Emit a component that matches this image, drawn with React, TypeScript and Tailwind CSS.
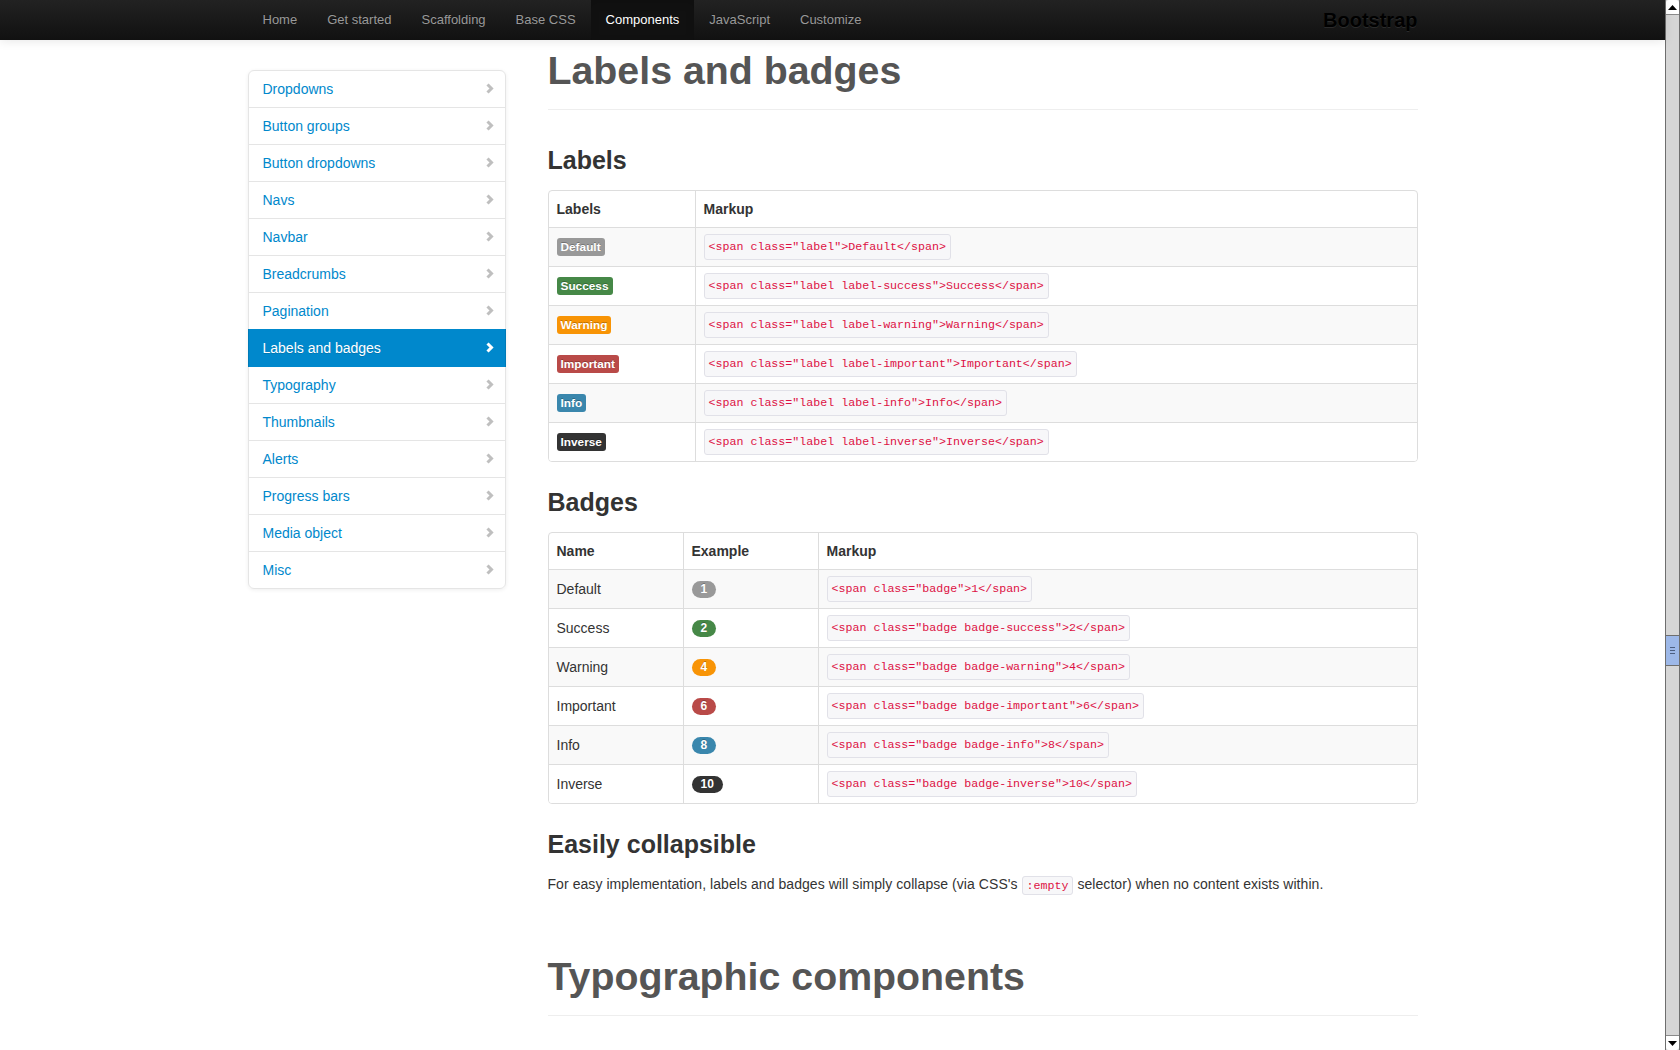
const navLinks = ["Home", "Get started", "Scaffolding", "Base CSS", "Components", "JavaScript", "Customize"];

const sideItems = [
  "Dropdowns",
  "Button groups",
  "Button dropdowns",
  "Navs",
  "Navbar",
  "Breadcrumbs",
  "Pagination",
  "Labels and badges",
  "Typography",
  "Thumbnails",
  "Alerts",
  "Progress bars",
  "Media object",
  "Misc",
];

const labels = [
  { name: "Default", cls: "label", bg: "bg-[#999999]" },
  { name: "Success", cls: "label label-success", bg: "bg-[#468847]" },
  { name: "Warning", cls: "label label-warning", bg: "bg-[#f89406]" },
  { name: "Important", cls: "label label-important", bg: "bg-[#b94a48]" },
  { name: "Info", cls: "label label-info", bg: "bg-[#3a87ad]" },
  { name: "Inverse", cls: "label label-inverse", bg: "bg-[#333333]" },
];

const badges = [
  { name: "Default", cls: "badge", n: "1", bg: "bg-[#999999]" },
  { name: "Success", cls: "badge badge-success", n: "2", bg: "bg-[#468847]" },
  { name: "Warning", cls: "badge badge-warning", n: "4", bg: "bg-[#f89406]" },
  { name: "Important", cls: "badge badge-important", n: "6", bg: "bg-[#b94a48]" },
  { name: "Info", cls: "badge badge-info", n: "8", bg: "bg-[#3a87ad]" },
  { name: "Inverse", cls: "badge badge-inverse", n: "10", bg: "bg-[#333333]" },
];

function Chevron({ active }: { active?: boolean }) {
  return (
    <svg width="14" height="14" viewBox="0 0 14 14" className="mr-[-6px] shrink-0">
      <polyline
        points="4.5,2.5 8.5,6.5 4.5,10.5"
        fill="none"
        stroke={active ? "#ffffff" : "#bfbfbf"}
        strokeWidth="3"
        strokeLinejoin="miter"
      />
    </svg>
  );
}

function Code({ children }: { children: string }) {
  return (
    <code className="rounded-[3px] border border-[#e1e1e8] bg-[#f7f7f9] px-1 py-[2px] font-['Liberation_Mono',monospace] text-[11.65px] tracking-normal whitespace-pre text-[#dd1144]">
      {children}
    </code>
  );
}

function Navbar() {
  return (
    <nav className="relative z-20 h-[40px] shrink-0 bg-gradient-to-b from-[#222222] to-[#111111] shadow-[0_1px_10px_rgba(0,0,0,0.1)]">
      <div className="mx-auto flex w-[1170px] items-center justify-between">
        <ul className="flex">
          {navLinks.map((l) => (
            <li key={l}>
              <a
                className={
                  l === "Components"
                    ? "block bg-[#111111] px-[15px] py-[10px] text-[13px] leading-[20px] text-white shadow-[inset_0_3px_8px_rgba(0,0,0,0.125)]"
                    : "block px-[15px] py-[10px] text-[13px] leading-[20px] text-[#999999] [text-shadow:0_-1px_0_rgba(0,0,0,0.25)]"
                }
              >
                {l}
              </a>
            </li>
          ))}
        </ul>
        <a className="py-[10px] text-[20px] leading-[20px] font-bold text-black [text-shadow:0_1px_0_rgba(255,255,255,0.1)]">
          Bootstrap
        </a>
      </div>
    </nav>
  );
}

function Sidebar() {
  return (
    <ul className="mt-[30px] w-[258px] rounded-[6px] bg-white shadow-[0_1px_4px_rgba(0,0,0,0.065)]">
      {sideItems.map((s, i) => {
        const active = s === "Labels and badges";
        const first = i === 0;
        const last = i === sideItems.length - 1;
        return (
          <li key={s} className={active ? "relative z-10 -mb-px" : "-mb-px"}>
            <a
              className={
                active
                  ? "flex h-[38px] items-center justify-between bg-[#0088cc] px-[15px] text-white [text-shadow:0_1px_0_rgba(0,0,0,0.15)] shadow-[inset_1px_0_0_rgba(0,0,0,0.1),inset_-1px_0_0_rgba(0,0,0,0.1)]"
                  : `flex h-[38px] items-center justify-between border border-[#e5e5e5] px-[14px] text-[#0088cc] ${
                      first ? "rounded-t-[6px]" : ""
                    } ${last ? "rounded-b-[6px]" : ""}`
              }
            >
              <span>{s}</span>
              <Chevron active={active} />
            </a>
          </li>
        );
      })}
    </ul>
  );
}

function LabelsTable() {
  return (
    <div className="mt-[10px] overflow-hidden rounded-[4px] border border-[#dddddd]">
      <div className="flex h-[36px] items-center font-bold">
        <div className="w-[146px] px-2">Labels</div>
        <div className="flex h-full flex-1 items-center border-l border-[#dddddd] px-2">Markup</div>
      </div>
      {labels.map((l, i) => (
        <div
          key={l.name}
          className={`flex h-[39px] border-t border-[#dddddd] ${i % 2 === 0 ? "bg-[#f9f9f9]" : "bg-white"}`}
        >
          <div className="flex w-[146px] items-center px-2">
            <span
              className={`rounded-[3px] px-1 py-[2px] text-[11.844px] leading-[14px] font-bold text-white [text-shadow:0_-1px_0_rgba(0,0,0,0.25)] ${l.bg}`}
            >
              {l.name}
            </span>
          </div>
          <div className="flex flex-1 items-center border-l border-[#dddddd] px-2">
            <Code>{`<span class="${l.cls}">${l.name}</span>`}</Code>
          </div>
        </div>
      ))}
    </div>
  );
}

function BadgesTable() {
  return (
    <div className="mt-[10px] overflow-hidden rounded-[4px] border border-[#dddddd]">
      <div className="flex h-[36px] font-bold">
        <div className="flex w-[134px] items-center px-2">Name</div>
        <div className="flex w-[135px] items-center border-l border-[#dddddd] px-2">Example</div>
        <div className="flex flex-1 items-center border-l border-[#dddddd] px-2">Markup</div>
      </div>
      {badges.map((b, i) => (
        <div
          key={b.name}
          className={`flex h-[39px] border-t border-[#dddddd] ${i % 2 === 0 ? "bg-[#f9f9f9]" : "bg-white"}`}
        >
          <div className="flex w-[134px] items-center px-2">{b.name}</div>
          <div className="flex w-[135px] items-center border-l border-[#dddddd] px-2">
            <span
              className={`rounded-[9px] px-[9px] py-[2px] text-[12px] leading-[13px] font-bold text-white [text-shadow:0_-1px_0_rgba(0,0,0,0.25)] ${b.bg}`}
            >
              {b.n}
            </span>
          </div>
          <div className="flex flex-1 items-center border-l border-[#dddddd] px-2">
            <Code>{`<span class="${b.cls}">${b.n}</span>`}</Code>
          </div>
        </div>
      ))}
    </div>
  );
}

function Scrollbar() {
  return (
    <div className="flex h-full w-[15px] shrink-0 flex-col border-x border-[#6e6e6e] bg-[#d6d6d6]">
      <div className="flex h-[15px] items-center justify-center rounded-t-[3px] border-b border-[#8a8a8a] bg-white">
        <svg width="9" height="5" viewBox="0 0 9 5">
          <polygon points="0,5 4.5,0 9,5" fill="#000" />
        </svg>
      </div>
      <div className="flex-1">
        <div className="mt-[620px] flex h-[31px] flex-col items-center justify-center gap-[2px] border-y border-[#6e6e6e] bg-[#9db8e8]">
          <div className="h-px w-[5px] bg-[#4c5e80]" />
          <div className="h-px w-[5px] bg-[#4c5e80]" />
          <div className="h-px w-[5px] bg-[#4c5e80]" />
        </div>
      </div>
      <div className="flex h-[15px] items-center justify-center rounded-b-[3px] border-t border-[#8a8a8a] bg-white">
        <svg width="9" height="5" viewBox="0 0 9 5">
          <polygon points="0,0 9,0 4.5,5" fill="#000" />
        </svg>
      </div>
    </div>
  );
}

export default function App() {
  return (
    <div className="flex h-[1050px] overflow-hidden bg-white font-['Liberation_Sans',Arial,sans-serif] text-[14px] leading-[20px] text-[#333333]">
      <div className="flex min-w-0 flex-1 flex-col">
        <Navbar />
        <div className="mx-auto flex w-[1170px] gap-[30px]">
          <aside className="w-[270px] shrink-0">
            <Sidebar />
          </aside>
          <main className="flex w-[870px] flex-col">
            <div className="border-b border-[#eeeeee] pt-[10px] pb-[9px]">
              <h1 className="mb-[10px] text-[39.3px] leading-[40px] font-bold text-[#555555]">Labels and badges</h1>
            </div>

            <h3 className="mt-[30px] text-[25px] leading-[40px] font-bold">Labels</h3>
            <LabelsTable />

            <h3 className="mt-[20px] text-[25px] leading-[40px] font-bold">Badges</h3>
            <BadgesTable />

            <h3 className="mt-[20px] text-[25px] leading-[40px] font-bold">Easily collapsible</h3>
            <p className="mt-[10px] tracking-[0.06px]">
              For easy implementation, labels and badges will simply collapse (via CSS's <Code>:empty</Code> selector)
              when no content exists within.
            </p>

            <div className="mt-[60px] border-b border-[#eeeeee] pb-[9px]">
              <h1 className="mb-[10px] text-[39.3px] leading-[40px] font-bold text-[#555555]">Typographic components</h1>
            </div>
          </main>
        </div>
      </div>
      <Scrollbar />
    </div>
  );
}
